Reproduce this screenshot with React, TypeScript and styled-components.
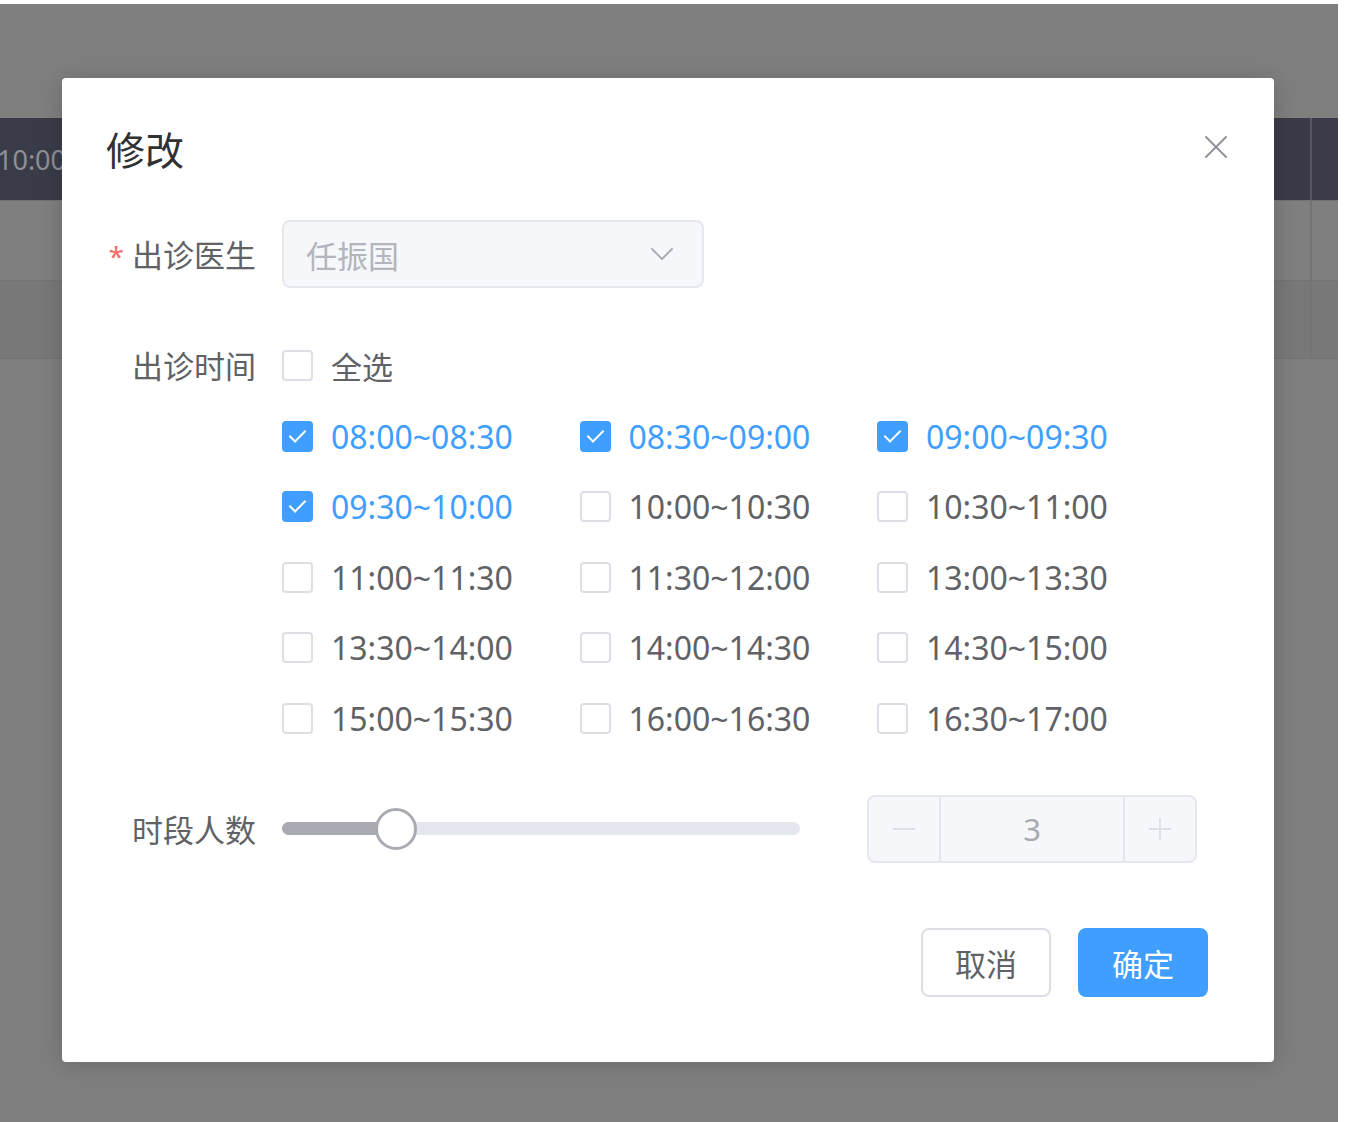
import styled, { createGlobalStyle } from 'styled-components'

const GlobalStyle = createGlobalStyle`
  html, body {
    margin: 0;
    padding: 0;
    background: #ffffff;
    font-family: "Noto Sans", "Noto Sans CJK SC", sans-serif;
  }
`

const slots = [
  '08:00~08:30', '08:30~09:00', '09:00~09:30',
  '09:30~10:00', '10:00~10:30', '10:30~11:00',
  '11:00~11:30', '11:30~12:00', '13:00~13:30',
  '13:30~14:00', '14:00~14:30', '14:30~15:00',
  '15:00~15:30', '16:00~16:30', '16:30~17:00',
]

const checkedSlots = ['08:00~08:30', '08:30~09:00', '09:00~09:30', '09:30~10:00']

// slider position in percent of the runway
const sliderPercent = 22

const CloseIcon = () => (
  <svg width='24' height='24' viewBox='0 0 24 24' fill='none' stroke='#909399' strokeWidth='2' strokeLinecap='round'>
    <path d='M2 2 L22 22 M22 2 L2 22' />
  </svg>
)

const ChevronDown = () => (
  <svg width='24' height='14' viewBox='0 0 24 14' fill='none' stroke='#a8abb2' strokeWidth='1.8' strokeLinecap='round' strokeLinejoin='round'>
    <path d='M2 2 L12 12 L22 2' />
  </svg>
)

const MinusIcon = () => (
  <svg width='24' height='24' viewBox='0 0 24 24' fill='none' stroke='#dcdfe6' strokeWidth='1.8'>
    <path d='M1 12 H23' />
  </svg>
)

const PlusIcon = () => (
  <svg width='24' height='24' viewBox='0 0 24 24' fill='none' stroke='#dcdfe6' strokeWidth='1.8'>
    <path d='M1 12 H23 M12 1 V23' />
  </svg>
)

const Checkbox = ({ label, checked, wide }: { label: string, checked: boolean, wide?: boolean }) => (
  <CheckItem $checked={checked} $size={wide ? 32 : 31}>
    <Box $checked={checked} />
    <span>{label}</span>
  </CheckItem>
)

const App = () => {
  return (
    <>
      <GlobalStyle />
      <Screen>
        <Backdrop>
          <HeaderBar>
            <HeaderCell>10:00</HeaderCell>
          </HeaderBar>
          <TableRow />
          <TableRow $dark />
        </Backdrop>

        <Dialog>
          <DialogHeader>
            <Title>修改</Title>
            <CloseBtn><CloseIcon /></CloseBtn>
          </DialogHeader>

          <Form>
            <FormItem $top={45}>
              <Label><Required>*</Required>出诊医生</Label>
              <Select>
                <span>任振国</span>
                <ChevronDown />
              </Select>
            </FormItem>

            <FormItem $top={39}>
              <Label $line={72}>出诊时间</Label>
              <div>
                <AllRow>
                  <Checkbox label='全选' checked={false} />
                </AllRow>
                <SlotGrid>
                  {slots.map((slot) => (
                    <Checkbox key={slot} label={slot} checked={checkedSlots.includes(slot)} wide />
                  ))}
                </SlotGrid>
              </div>
            </FormItem>

            <FormItem $top={41}>
              <Label>时段人数</Label>
              <SliderRow>
                <Runway>
                  <Bar style={{ width: `${sliderPercent}%` }} />
                  <Thumb style={{ left: `${sliderPercent}%` }} />
                </Runway>
                <NumberInput>
                  <Stepper><MinusIcon /></Stepper>
                  <NumberValue>3</NumberValue>
                  <Stepper $right><PlusIcon /></Stepper>
                </NumberInput>
              </SliderRow>
            </FormItem>
          </Form>

          <Footer>
            <Button>取消</Button>
            <Button $primary>确定</Button>
          </Footer>
        </Dialog>
      </Screen>
    </>
  )
}

const Screen = styled.div`
  position: relative;
  width: 1346px;
  height: 1122px;
  overflow: hidden;
  padding-top: 4px;
  box-sizing: border-box;
`

const Backdrop = styled.div`
  width: 1338px;
  height: 1118px;
  background: #7f7f7f;
  padding-top: 114px;
  box-sizing: border-box;
`

const HeaderBar = styled.div`
  height: 82px;
  background: #393c48;
  display: flex;
  align-items: center;
  background-image: linear-gradient(to right, transparent 1310px, #555864 1310px, #555864 1312px, transparent 1312px);
`

const HeaderCell = styled.span`
  margin-left: -3px;
  font-size: 27px;
  color: #8e9097;
  font-family: "Noto Sans", sans-serif;
`

const TableRow = styled.div<{ $dark?: boolean }>`
  height: ${({ $dark }) => ($dark ? 77 : 79)}px;
  background: ${({ $dark }) => ($dark ? '#787878' : '#7f7f7f')};
  border-top: 1px solid #737373;
  border-bottom: ${({ $dark }) => ($dark ? '1px solid #737373' : 'none')};
  background-image: linear-gradient(to right, transparent 1310px, #747474 1310px, #747474 1312px, transparent 1312px);
`

const Dialog = styled.div`
  position: absolute;
  left: 62px;
  top: 78px;
  width: 1212px;
  height: 984px;
  background: #ffffff;
  border-radius: 4px;
  box-shadow: 0 2px 24px rgba(0, 0, 0, 0.18);
  display: flex;
  flex-direction: column;
  box-sizing: border-box;
`

const DialogHeader = styled.div`
  position: relative;
  padding: 44px 44px 0 44px;
`

const Title = styled.h2`
  margin: 0;
  font-size: 39px;
  line-height: 53px;
  font-weight: 400;
  color: #303133;
  font-family: "Noto Sans CJK SC", sans-serif;
`

const CloseBtn = styled.button`
  position: absolute;
  top: 57px;
  right: 46px;
  width: 24px;
  height: 24px;
  padding: 0;
  border: none;
  background: none;
  display: flex;
`

const Form = styled.div`
  padding: 0 44px;
  display: flex;
  flex-direction: column;
`

const FormItem = styled.div<{ $top: number }>`
  display: flex;
  align-items: flex-start;
  margin-top: ${({ $top }) => $top}px;
`

const Label = styled.label<{ $line?: number }>`
  width: 176px;
  flex-shrink: 0;
  box-sizing: border-box;
  padding-right: 26px;
  text-align: right;
  font-size: 31px;
  line-height: ${({ $line }) => $line ?? 68}px;
  color: #606266;
  font-family: "Noto Sans CJK SC", sans-serif;
`

const Required = styled.span`
  color: #f56c6c;
  font-size: 28px;
  margin-right: 8px;
  font-family: "Noto Sans", sans-serif;
`

const Select = styled.div`
  width: 422px;
  height: 68px;
  box-sizing: border-box;
  border: 2px solid #e4e7ed;
  border-radius: 8px;
  background: #f5f7fa;
  display: flex;
  align-items: center;
  justify-content: space-between;
  padding: 0 28px 0 22px;
  font-size: 31px;
  color: #b2b5bc;
  font-family: "Noto Sans CJK SC", sans-serif;
`

const AllRow = styled.div`
  display: flex;
  height: 72px;
  align-items: center;
`

const SlotGrid = styled.div`
  display: grid;
  grid-template-columns: repeat(3, 297.5px);
  grid-auto-rows: 70.5px;
  align-items: center;
`

const CheckItem = styled.div<{ $checked: boolean, $size: number }>`
  display: flex;
  align-items: center;
  gap: 18px;
  font-size: ${({ $size }) => $size}px;
  color: ${({ $checked }) => ($checked ? '#409eff' : '#606266')};
  font-family: "Noto Sans", "Noto Sans CJK SC", sans-serif;
  white-space: nowrap;
`

const Box = styled.span<{ $checked: boolean }>`
  position: relative;
  width: 31px;
  height: 31px;
  box-sizing: border-box;
  border-radius: 4px;
  border: 2px solid ${({ $checked }) => ($checked ? '#409eff' : '#dcdfe6')};
  background: ${({ $checked }) => ($checked ? '#409eff' : '#ffffff')};
  flex-shrink: 0;

  &::after {
    content: '';
    display: ${({ $checked }) => ($checked ? 'block' : 'none')};
    position: absolute;
    left: 9px;
    top: 3px;
    width: 7px;
    height: 14px;
    border: 2px solid #ffffff;
    border-left: 0;
    border-top: 0;
    transform: rotate(45deg);
  }
`

const SliderRow = styled.div`
  display: flex;
  align-items: center;
  height: 68px;
`

const Runway = styled.div`
  position: relative;
  width: 518px;
  height: 13px;
  border-radius: 7px;
  background: #e4e7ed;
`

const Bar = styled.div`
  height: 100%;
  border-radius: 7px 0 0 7px;
  background: #a8abb2;
`

const Thumb = styled.div`
  position: absolute;
  top: 50%;
  width: 42px;
  height: 42px;
  box-sizing: border-box;
  border-radius: 50%;
  border: 3px solid #a8abb2;
  background: #ffffff;
  transform: translate(-50%, -50%);
`

const NumberInput = styled.div`
  margin-left: 67px;
  width: 330px;
  height: 68px;
  box-sizing: border-box;
  border: 2px solid #e4e7ed;
  border-radius: 8px;
  background: #f5f7fa;
  display: flex;
`

const Stepper = styled.div<{ $right?: boolean }>`
  width: 70px;
  display: flex;
  align-items: center;
  justify-content: center;
  border-left: ${({ $right }) => ($right ? '2px solid #e4e7ed' : 'none')};
  border-right: ${({ $right }) => ($right ? 'none' : '2px solid #e4e7ed')};
`

const NumberValue = styled.div`
  flex: 1;
  display: flex;
  align-items: center;
  justify-content: center;
  font-size: 31px;
  color: #a8abb2;
  font-family: "Noto Sans", sans-serif;
`

const Footer = styled.div`
  margin-top: auto;
  padding: 0 66px 65px 0;
  display: flex;
  justify-content: flex-end;
  gap: 27px;
`

const Button = styled.button<{ $primary?: boolean }>`
  width: 130px;
  height: 69px;
  box-sizing: border-box;
  border-radius: 8px;
  border: 2px solid ${({ $primary }) => ($primary ? '#409eff' : '#dcdfe6')};
  background: ${({ $primary }) => ($primary ? '#409eff' : '#ffffff')};
  color: ${({ $primary }) => ($primary ? '#ffffff' : '#606266')};
  font-size: 31px;
  font-family: "Noto Sans CJK SC", sans-serif;
  padding: 0;
`

export default App
